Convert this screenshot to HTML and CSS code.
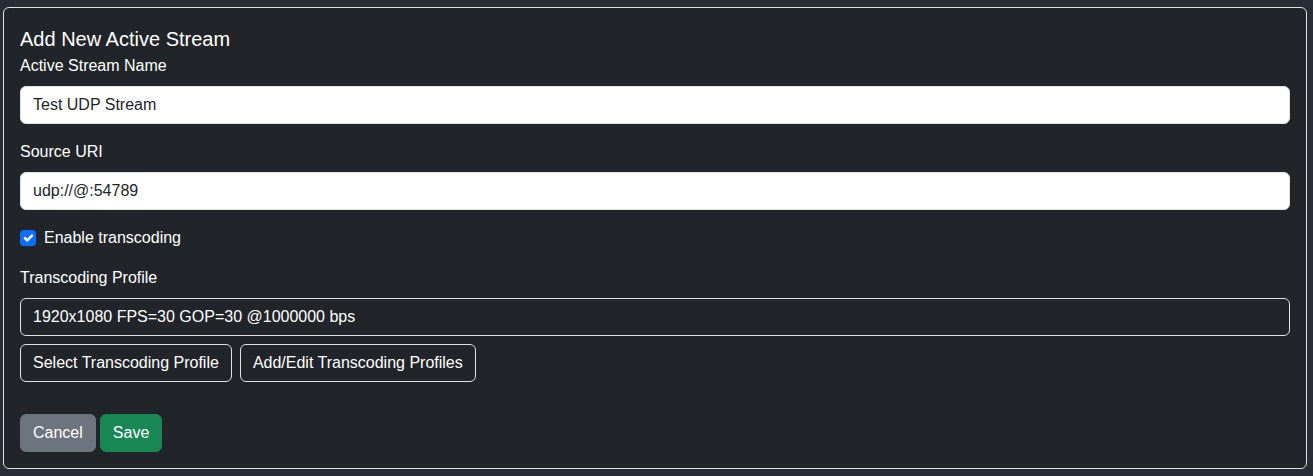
FILE: index.html
```html
<!DOCTYPE html>
<html lang="en">
<head>
<meta charset="utf-8">
<title>Add New Active Stream</title>
<link rel="stylesheet" href="styles.css">
</head>
<body>
<div class="card">
  <h5 class="title">Add New Active Stream</h5>
  <div class="field">
    <label class="label">Active Stream Name</label>
    <input class="input" type="text" value="Test UDP Stream">
  </div>
  <div class="field">
    <label class="label">Source URI</label>
    <input class="input" type="text" value="udp://@:54789">
  </div>
  <div class="check-row">
    <span class="checkbox">
      <svg viewBox="0 0 20 20" width="16" height="16"><path d="M6 10l3 3 6-6" fill="none" stroke="#fff" stroke-width="3" stroke-linecap="round" stroke-linejoin="round"/></svg>
    </span>
    <span class="check-label">Enable transcoding</span>
  </div>
  <div class="profile">
    <label class="label">Transcoding Profile</label>
    <input class="input input-dark" type="text" value="1920x1080 FPS=30 GOP=30 @1000000 bps" readonly>
    <div class="btn-row">
      <button class="btn btn-outline">Select Transcoding Profile</button>
      <button class="btn btn-outline">Add/Edit Transcoding Profiles</button>
    </div>
  </div>
  <div class="actions">
    <button class="btn btn-secondary">Cancel</button>
    <button class="btn btn-success">Save</button>
  </div>
</div>
</body>
</html>
```

FILE: styles.css
```css
html, body {
  margin: 0;
  padding: 0;
  background: #282c34;
  font-family: "Liberation Sans", Arial, sans-serif;
  font-size: 16px;
  color: #fff;
}
body {
  padding: 7px 6px 8px 3px;
}
.card {
  background: #212529;
  border: 1px solid #dee2e6;
  border-radius: 6px;
  padding: 16px;
  display: flex;
  flex-direction: column;
}
.title {
  margin: 0;
  font-size: 20px;
  font-weight: 500;
  line-height: 30px;
}
.field {
  display: flex;
  flex-direction: column;
  margin-bottom: 16px;
}
.label {
  line-height: 24px;
  margin-bottom: 8px;
}
.input {
  box-sizing: border-box;
  height: 38px;
  width: 100%;
  border: 1px solid #dee2e6;
  border-radius: 6px;
  padding: 6px 12px;
  font-family: inherit;
  font-size: 16px;
  line-height: 24px;
  background: #fff;
  color: #212529;
  outline: none;
}
.input-dark {
  background: #212529;
  color: #fff;
}
.check-row {
  display: flex;
  align-items: flex-start;
  min-height: 24px;
  margin-bottom: 16px;
  line-height: 24px;
}
.checkbox {
  width: 16px;
  height: 16px;
  margin-top: 4px;
  margin-right: 8px;
  background: #0d6efd;
  border-radius: 4px;
  display: flex;
  align-items: center;
  justify-content: center;
}
.checkbox svg { display: block; }
.profile {
  display: flex;
  flex-direction: column;
}
.btn-row {
  display: flex;
  gap: 8px;
  margin-top: 8px;
}
.btn {
  box-sizing: border-box;
  height: 38px;
  padding: 6px 12px;
  border-radius: 6px;
  border: 1px solid transparent;
  font-family: inherit;
  font-size: 16px;
  line-height: 24px;
  color: #fff;
  background: transparent;
}
.btn-outline {
  border-color: #dee2e6;
}
.actions {
  display: flex;
  gap: 4px;
  margin-top: 32px;
}
.btn-secondary {
  background: #6c757d;
  border-color: #6c757d;
}
.btn-success {
  background: #198754;
  border-color: #198754;
}
```
